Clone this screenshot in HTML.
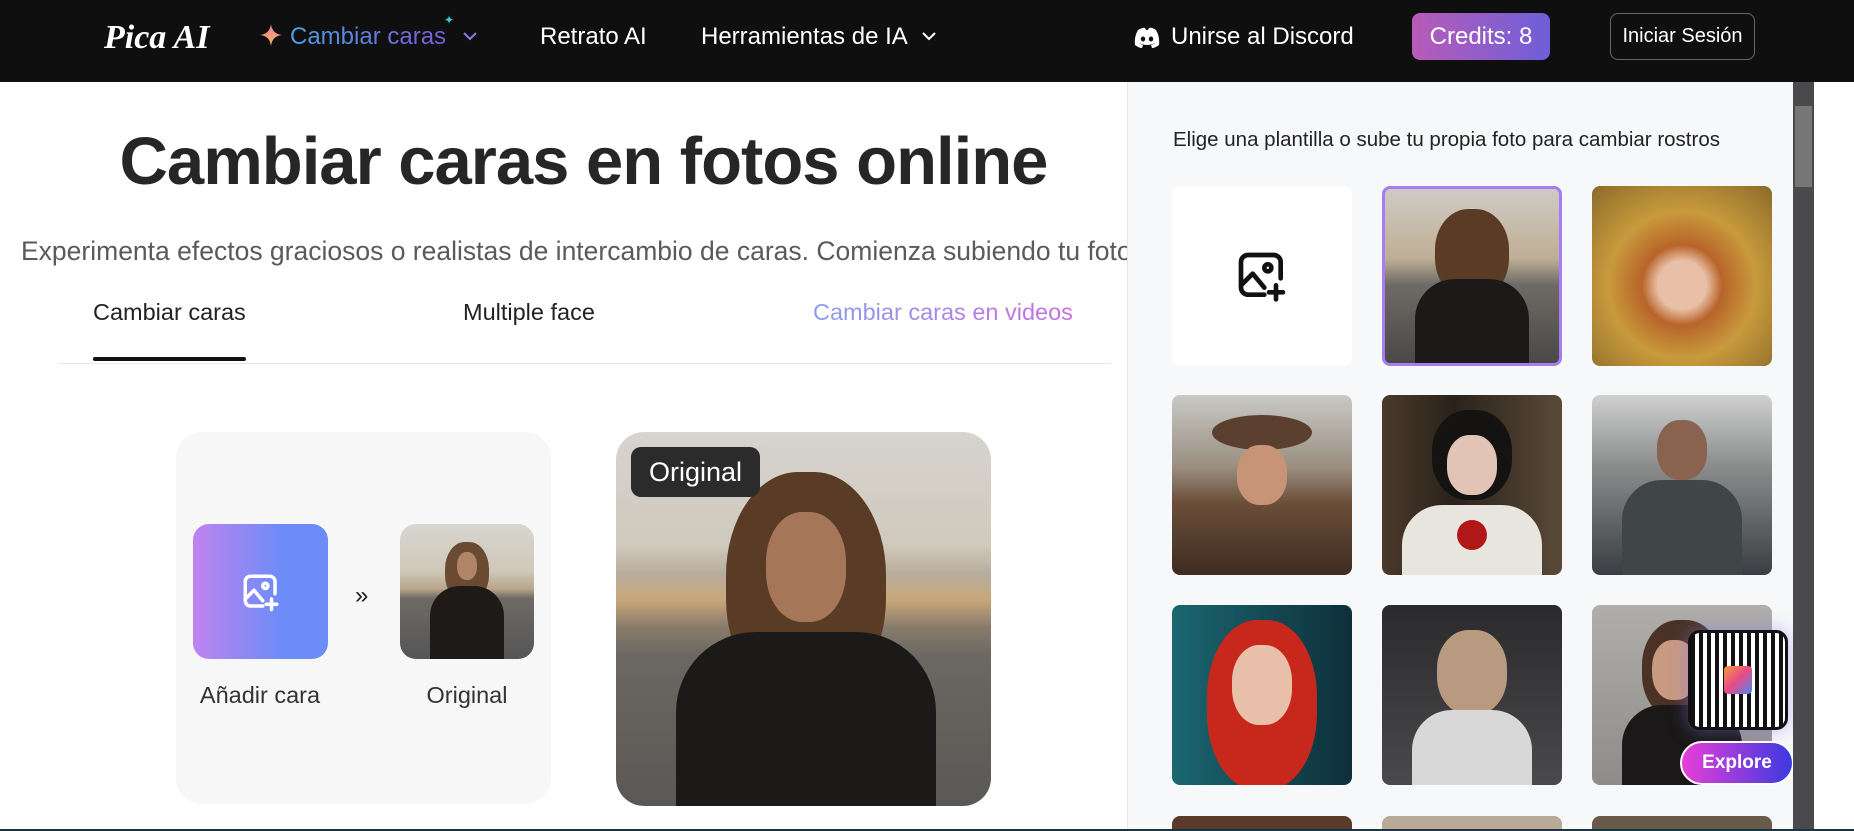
<!DOCTYPE html>
<html style="width:1854px;height:831px;overflow:hidden"><head><meta charset="utf-8"><style>
*{box-sizing:border-box;margin:0;padding:0}
body{width:1854px;height:831px;overflow:hidden;background:#fff;font-family:"Liberation Sans",sans-serif;position:relative}
.nav{position:absolute;left:0;top:0;width:1854px;height:82px;background:#0f0f10;color:#fff}
.nav .t{position:absolute;top:23px;font-size:24px;line-height:28px}
.abs{position:absolute}
.panel{position:absolute;left:1127px;top:82px;width:666px;height:749px;background:#f7f8f9;border-left:1px solid #e6e6e8}
.sb{position:absolute;left:1793px;top:82px;width:21px;height:749px;background:#4a4a4c}
.tile{position:absolute;width:180px;height:180px;border-radius:8px;overflow:hidden}
.photo{position:absolute;overflow:hidden}
.bottomline{position:absolute;left:0;top:829px;width:1854px;height:2px;background:#1d3340}
#wrap{position:absolute;left:0;top:0;width:1854px;height:831px;overflow:hidden}
</style></head><body><div id="wrap">
<div class="nav">
  <div class="t" style="left:104px;top:18px;font-family:'Liberation Serif',serif;font-style:italic;font-weight:bold;font-size:34px;line-height:40px">Pica AI</div>
  <svg class="abs" style="left:260px;top:24px" width="22" height="22" viewBox="0 0 20 20"><defs><linearGradient id="sg" x1="0" y1="0" x2="0" y2="1"><stop offset="0" stop-color="#f07fa0"/><stop offset="1" stop-color="#f7b45a"/></linearGradient></defs><path d="M10 0 Q11 9 20 10 Q11 11 10 20 Q9 11 0 10 Q9 9 10 0Z" fill="url(#sg)"/></svg>
  <div class="t" style="left:290px;background:linear-gradient(90deg,#4aa0e6,#7b5bd6);-webkit-background-clip:text;color:transparent">Cambiar caras</div>
  <div class="abs" style="left:444px;top:13px;color:#3cc9d6;font-size:12px">✦</div>
  <svg class="abs" style="left:462px;top:30px" width="16" height="12" viewBox="0 0 16 12"><path d="M2 3 L8 9 L14 3" stroke="#8b7be8" stroke-width="2" fill="none"/></svg>
  <div class="t" style="left:540px">Retrato AI</div>
  <div class="t" style="left:701px">Herramientas de IA</div>
  <svg class="abs" style="left:921px;top:30px" width="16" height="12" viewBox="0 0 16 12"><path d="M2 3 L8 9 L14 3" stroke="#fff" stroke-width="2" fill="none"/></svg>
  <svg class="abs" style="left:1133px;top:27px" width="28" height="22" viewBox="0 0 28 22"><path d="M5 3 Q10 0 12 1 L13 3 Q14 2.5 15 3 L16 1 Q19 0 23 3 Q27 10 26 18 Q22 21 19 21 L18 18 Q21 17 22 16 Q14 20 6 16 Q7 17 10 18 L9 21 Q6 21 2 18 Q1 10 5 3Z" fill="#fff"/><ellipse cx="10" cy="12" rx="2.2" ry="2.5" fill="#0f0f10"/><ellipse cx="18" cy="12" rx="2.2" ry="2.5" fill="#0f0f10"/></svg>
  <div class="t" style="left:1171px">Unirse al Discord</div>
  <div class="abs" style="left:1412px;top:13px;width:138px;height:47px;border-radius:8px;background:linear-gradient(90deg,#b85bb8,#6d5fd8);font-size:24px;line-height:47px;text-align:center">Credits: 8</div>
  <div class="abs" style="left:1610px;top:13px;width:145px;height:47px;border-radius:8px;border:1px solid #666;font-size:20px;line-height:45px;text-align:center">Iniciar Sesión</div>
</div>

<div class="abs" style="left:0;width:1167px;top:122px;text-align:center;font-size:67px;font-weight:bold;color:#262626;line-height:80px;letter-spacing:-1px">Cambiar caras en fotos online</div>
<div class="abs" style="left:21px;top:236px;width:1106px;overflow:hidden;white-space:nowrap;font-size:26.5px;color:#5a5a5a;line-height:30px">Experimenta efectos graciosos o realistas de intercambio de caras. Comienza subiendo tu foto</div>
<div class="abs" style="left:93px;top:299px;font-size:23.5px;color:#222">Cambiar caras</div>
<div class="abs" style="left:463px;top:299px;font-size:23.5px;color:#222">Multiple face</div>
<div class="abs" style="left:813px;top:299px;font-size:23.5px;background:linear-gradient(90deg,#8c9cf0,#c56fe0);-webkit-background-clip:text;color:transparent">Cambiar caras en videos</div>
<div class="abs" style="left:59px;top:363px;width:1052px;height:1px;background:#e8e8e8"></div>
<div class="abs" style="left:93px;top:357px;width:153px;height:4px;border-radius:2px;background:#111"></div>

<div class="abs" style="left:176px;top:432px;width:375px;height:372px;border-radius:26px;background:#f7f7f7"></div>
<div class="abs" style="left:193px;top:524px;width:135px;height:135px;border-radius:16px;background:linear-gradient(90deg,#c083f0,#6c8cf8 65%)"></div>
<svg class="abs" style="left:240px;top:571px" width="42" height="42" viewBox="0 0 24 24" fill="none" stroke="#fff" stroke-width="2" stroke-linecap="round" stroke-linejoin="round"><path d="M13 20H6a3 3 0 0 1-3-3V6a3 3 0 0 1 3-3h11a3 3 0 0 1 3 3v7"/><path d="M3 16l5-5 5 6"/><circle cx="14.5" cy="8.5" r="1.5"/><path d="M18 16v6M15 19h6"/></svg>
<div class="abs" style="left:355px;top:582px;font-size:24px;color:#222">»</div>
<div class="photo" style="left:400px;top:524px;width:134px;height:135px;border-radius:16px;background:linear-gradient(#d8d6d0 0%,#cfc8ba 35%,#b9a58a 48%,#6e6a66 55%,#555 100%)">
  <div class="abs" style="left:45px;top:18px;width:44px;height:60px;border-radius:45%;background:#6b4a32"></div>
  <div class="abs" style="left:57px;top:28px;width:20px;height:28px;border-radius:45%;background:#b08466"></div>
  <div class="abs" style="left:30px;top:62px;width:74px;height:80px;border-radius:30px 30px 0 0;background:#1d1a18"></div>
</div>
<div class="abs" style="left:190px;top:682px;width:140px;text-align:center;font-size:23.5px;color:#333">Añadir cara</div>
<div class="abs" style="left:397px;top:682px;width:140px;text-align:center;font-size:23.5px;color:#333">Original</div>

<div class="photo" style="left:616px;top:432px;width:375px;height:374px;border-radius:28px;background:linear-gradient(#d6d4cf 0%,#d0c9bd 30%,#b8ad9c 38%,#c8a67a 45%,#8a7c6c 52%,#6b6761 60%,#5a5856 100%)">
  <div class="abs" style="left:110px;top:40px;width:160px;height:230px;border-radius:45%;background:#5a3c26"></div>
  <div class="abs" style="left:150px;top:80px;width:80px;height:110px;border-radius:45%;background:#a67658"></div>
  <div class="abs" style="left:60px;top:200px;width:260px;height:190px;border-radius:80px 80px 0 0;background:#1c1a19"></div>
  <div class="abs" style="left:15px;top:15px;width:129px;height:50px;border-radius:10px;background:#2b2b2b;color:#fff;font-size:27px;line-height:50px;text-align:center">Original</div>
</div>

<div class="panel"></div>
<div class="abs" style="left:1173px;top:128px;font-size:20.5px;color:#222">Elige una plantilla o sube tu propia foto para cambiar rostros</div>
<div class="tile" style="left:1172px;top:186px;background:#fff"></div>
<svg class="abs" style="left:1234px;top:248px" width="56" height="56" viewBox="0 0 24 24" fill="none" stroke="#111" stroke-width="2" stroke-linecap="round" stroke-linejoin="round"><path d="M13 20H6a3 3 0 0 1-3-3V6a3 3 0 0 1 3-3h11a3 3 0 0 1 3 3v7"/><path d="M3 16l5-5 5 6"/><circle cx="14.5" cy="8.5" r="1.5"/><path d="M18 16v6M15 19h6"/></svg>
<div class="tile" style="left:1382px;top:186px;border:3px solid #a67cf3;background:linear-gradient(#cfcbc4 0%,#bfae95 40%,#6e6a66 55%,#4a4846 100%)"><div class="abs" style="left:50px;top:20px;width:74px;height:90px;border-radius:45%;background:#5a3c26"></div><div class="abs" style="left:30px;top:90px;width:114px;height:100px;border-radius:40px 40px 0 0;background:#1c1a19"></div></div>
<div class="tile" style="left:1592px;top:186px;background:radial-gradient(circle at 50% 55%,#e8c0a8 0 18%,#b8642a 30%,#c89a3c 55%,#8a6a2a 100%)"></div>
<div class="tile" style="left:1172px;top:395px;background:linear-gradient(#c9c9c6,#9a8e80 40%,#6b4e38 60%,#3e2c20)"><div class="abs" style="left:40px;top:20px;width:100px;height:35px;border-radius:50%;background:#5b4030"></div><div class="abs" style="left:65px;top:50px;width:50px;height:60px;border-radius:45%;background:#c89478"></div></div>
<div class="tile" style="left:1382px;top:395px;background:linear-gradient(90deg,#4a3a2a,#2a221b 40%,#5a4a38)"><div class="abs" style="left:50px;top:15px;width:80px;height:90px;border-radius:45%;background:#151212"></div><div class="abs" style="left:65px;top:40px;width:50px;height:60px;border-radius:45%;background:#e2c4b4"></div><div class="abs" style="left:20px;top:110px;width:140px;height:70px;border-radius:40px 40px 0 0;background:#e8e4de"></div><div class="abs" style="left:75px;top:125px;width:30px;height:30px;border-radius:50%;background:#b01818"></div></div>
<div class="tile" style="left:1592px;top:395px;background:linear-gradient(#cfd0cf,#8a8c8c 40%,#3a3e42)"><div class="abs" style="left:65px;top:25px;width:50px;height:60px;border-radius:45%;background:#8a6250"></div><div class="abs" style="left:30px;top:85px;width:120px;height:95px;border-radius:40px 40px 0 0;background:#404548"></div></div>
<div class="tile" style="left:1172px;top:605px;background:linear-gradient(90deg,#1b6670,#0e2f3a)"><div class="abs" style="left:35px;top:15px;width:110px;height:170px;border-radius:45%;background:#c8281c"></div><div class="abs" style="left:60px;top:40px;width:60px;height:80px;border-radius:45%;background:#e8c0aa"></div></div>
<div class="tile" style="left:1382px;top:605px;background:linear-gradient(#2a2a2c,#4a4a4c)"><div class="abs" style="left:55px;top:25px;width:70px;height:85px;border-radius:45%;background:#b89a80"></div><div class="abs" style="left:30px;top:105px;width:120px;height:80px;border-radius:40px 40px 0 0;background:#d8d8d8"></div></div>
<div class="tile" style="left:1592px;top:605px;background:linear-gradient(#b0aeab,#8e8c8a)"><div class="abs" style="left:50px;top:15px;width:80px;height:100px;border-radius:45%;background:#4a3226"></div><div class="abs" style="left:60px;top:35px;width:45px;height:60px;border-radius:45%;background:#c89a82"></div><div class="abs" style="left:30px;top:100px;width:120px;height:80px;border-radius:40px 40px 0 0;background:#1a1818"></div></div>
<div class="tile" style="left:1172px;top:816px;height:15px;border-radius:8px 8px 0 0;background:#5a3a28"></div>
<div class="tile" style="left:1382px;top:816px;height:15px;border-radius:8px 8px 0 0;background:#b8aa98"></div>
<div class="tile" style="left:1592px;top:816px;height:15px;border-radius:8px 8px 0 0;background:#6a5a4c"></div>

<div class="abs" style="left:1688px;top:630px;width:100px;height:100px;border-radius:12px;background:#fff;border:3px solid #111;box-shadow:0 0 18px rgba(140,120,240,.5);background-image:repeating-linear-gradient(90deg,#111 0 4px,transparent 4px 8px),repeating-linear-gradient(0deg,#fff 0 3px,transparent 3px 7px)"></div>
<div class="abs" style="left:1724px;top:666px;width:28px;height:28px;border-radius:4px;background:linear-gradient(135deg,#f59a3a,#e64a8a,#4a8af0)"></div>
<div class="abs" style="left:1680px;top:741px;width:114px;height:44px;border-radius:22px;border:2px solid #fff;background:linear-gradient(90deg,#e83ed8,#3a3ae0);color:#fff;font-weight:bold;font-size:19px;line-height:40px;text-align:center">Explore</div>

<div class="sb"><div class="abs" style="left:2px;top:24px;width:17px;height:81px;background:#777"></div></div>
<div class="bottomline"></div>
</div></body></html>
